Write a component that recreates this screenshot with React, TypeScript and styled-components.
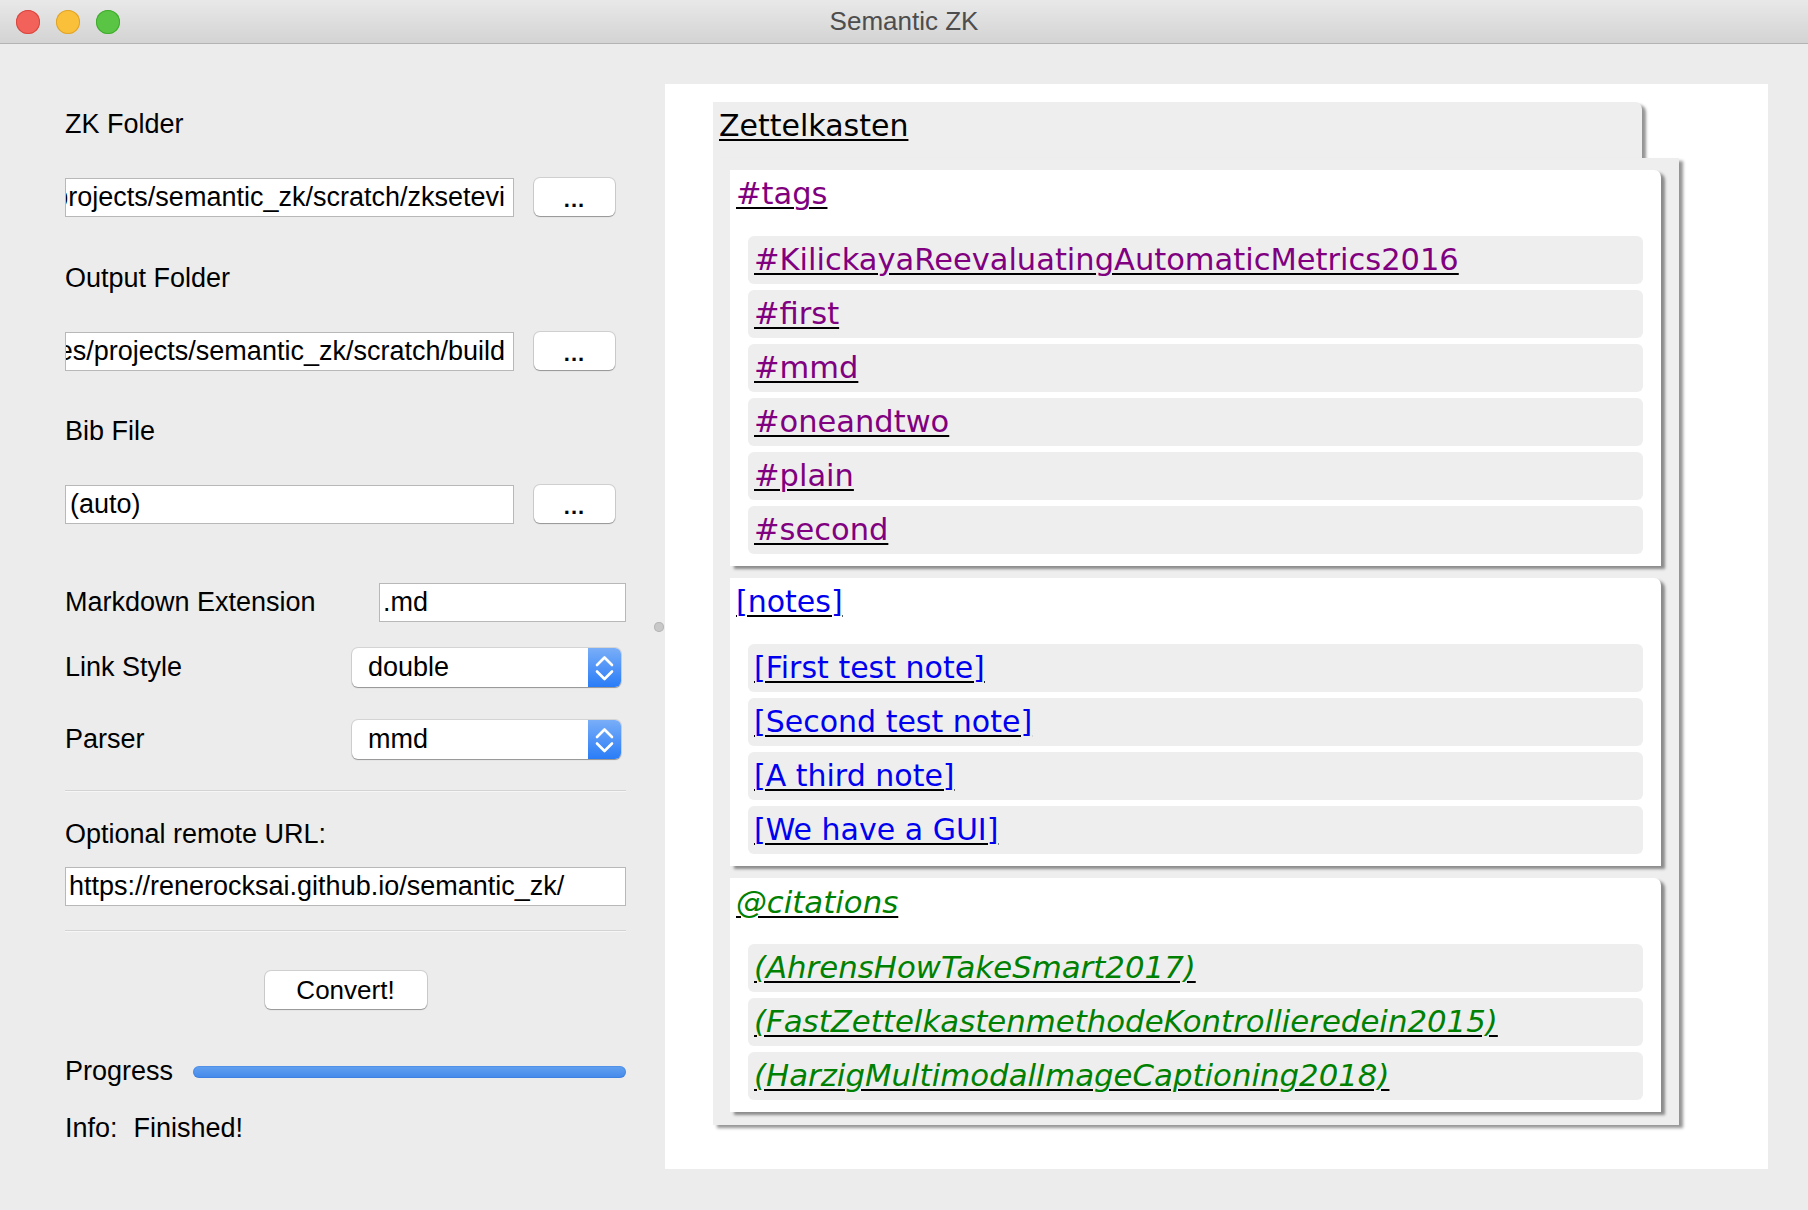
import React from "react";
import styled, { createGlobalStyle, css } from "styled-components";

const GlobalStyle = createGlobalStyle`
  html, body {
    margin: 0;
    padding: 0;
    background: #ececec;
  }
  body {
    font-family: "Liberation Sans", Arial, sans-serif;
    color: #000;
  }
`;

const Window = styled.div`
  width: 1808px;
  height: 1210px;
  display: flex;
  flex-direction: column;
  background: #ececec;
  overflow: hidden;
`;

const TitleBar = styled.div`
  height: 43px;
  flex: none;
  border-bottom: 1px solid #b3b3b3;
  background: linear-gradient(#e9e9e9, #d3d3d3);
  display: grid;
  grid-template-columns: 1fr auto 1fr;
  align-items: center;
`;

const Lights = styled.div`
  display: flex;
  gap: 16px;
  padding-left: 16px;
`;

const Light = styled.span<{ $fill: string; $edge: string }>`
  width: 24px;
  height: 24px;
  border-radius: 50%;
  background: ${(p) => p.$fill};
  box-shadow: inset 0 0 0 1px ${(p) => p.$edge};
`;

const Title = styled.div`
  font-size: 26px;
  color: #4d4d4d;
`;

const Body = styled.div`
  flex: 1;
  display: flex;
  min-height: 0;
`;

const LeftPanel = styled.div`
  width: 652px;
  flex: none;
  box-sizing: border-box;
  padding: 0 26px 0 65px;
  display: flex;
  flex-direction: column;
  font-size: 27px;
`;

const Label = styled.div<{ $top: number }>`
  height: 39px;
  line-height: 39px;
  margin-top: ${(p) => p.$top}px;
  white-space: nowrap;
`;

const PathRow = styled.div<{ $top: number }>`
  display: flex;
  gap: 20px;
  margin-top: ${(p) => p.$top}px;
`;

const fieldBox = css`
  box-sizing: border-box;
  height: 39px;
  background: #fff;
  border: 1px solid #b8b8b8;
  display: flex;
  align-items: center;
  overflow: hidden;
  white-space: nowrap;
`;

const PathField = styled.div<{ $scrolled?: boolean }>`
  ${fieldBox};
  width: 449px;
  justify-content: ${(p) => (p.$scrolled ? "flex-end" : "flex-start")};
  padding: 0 8px 0 4px;
`;

const PushButton = styled.div<{ $width: number }>`
  box-sizing: border-box;
  width: ${(p) => p.$width}px;
  height: 38px;
  background: #fff;
  border-radius: 6px;
  box-shadow: 0 0 0 1px rgba(0, 0, 0, 0.12), 0 1px 1px rgba(0, 0, 0, 0.28);
  display: flex;
  align-items: center;
  justify-content: center;
  font-size: 26px;
`;

const Dots = styled.span`
  font-weight: bold;
  font-size: 22px;
  letter-spacing: 1px;
  padding-top: 6px;
`;

const FormRow = styled.div<{ $top: number }>`
  display: flex;
  align-items: center;
  justify-content: space-between;
  margin-top: ${(p) => p.$top}px;
`;

const ExtField = styled.div`
  ${fieldBox};
  width: 247px;
  padding-left: 3px;
`;

const Select = styled.div`
  box-sizing: border-box;
  width: 269px;
  height: 39px;
  margin-right: 5px;
  display: flex;
  background: #fff;
  border-radius: 6px;
  box-shadow: 0 0 0 1px rgba(0, 0, 0, 0.1), 0 1px 1px rgba(0, 0, 0, 0.3);
`;

const SelectText = styled.div`
  flex: 1;
  line-height: 39px;
  padding-left: 16px;
`;

const SelectArrow = styled.div`
  width: 33px;
  border-radius: 0 6px 6px 0;
  background: linear-gradient(#79aef8, #2a7cf7);
  display: flex;
  align-items: center;
  justify-content: center;
`;

const Separator = styled.div<{ $top: number }>`
  height: 1px;
  background: #d3d3d3;
  margin-top: ${(p) => p.$top}px;
  box-shadow: 0 1px 0 #f6f6f6;
`;

const UrlField = styled.div<{ $top: number }>`
  ${fieldBox};
  margin-top: ${(p) => p.$top}px;
  padding-left: 3px;
`;

const CenterRow = styled.div<{ $top: number }>`
  display: flex;
  justify-content: center;
  margin-top: ${(p) => p.$top}px;
`;

const ProgressRow = styled.div<{ $top: number }>`
  height: 39px;
  display: flex;
  align-items: center;
  gap: 20px;
  margin-top: ${(p) => p.$top}px;
`;

const ProgressBar = styled.div`
  flex: 1;
  height: 12px;
  border-radius: 6px;
  background: linear-gradient(#62a1f1, #4389ea);
  box-shadow: inset 0 0 0 1px rgba(40, 100, 200, 0.25);
`;

const InfoRow = styled.div<{ $top: number }>`
  height: 39px;
  line-height: 39px;
  display: flex;
  gap: 16px;
  margin-top: ${(p) => p.$top}px;
`;

const Splitter = styled.div`
  width: 13px;
  flex: none;
  display: flex;
  align-items: center;
  justify-content: center;
`;

const SplitterDot = styled.span`
  width: 10px;
  height: 10px;
  border-radius: 50%;
  background: #c8c8c8;
  box-shadow: inset 0 0 0 1px #b6b6b6;
`;

const RightPanel = styled.div`
  flex: 1;
  margin: 40px 40px 41px 0;
  background: #fff;
  box-sizing: border-box;
  padding: 18px 0 0 48px;
  font-family: "DejaVu Sans", Verdana, sans-serif;
  font-size: 30px;
  display: flex;
  flex-direction: column;
  align-items: flex-start;
`;

const shadow = "4px 3px 3px rgba(0, 0, 0, 0.42)";

const ZkHeader = styled.div`
  width: 929px;
  height: 56px;
  box-sizing: border-box;
  padding: 4px 6px;
  background: #eeeeee;
  border-radius: 0 7px 0 0;
  box-shadow: ${shadow};
`;

const ZkBody = styled.div`
  width: 966px;
  box-sizing: border-box;
  padding: 12px 18px 13px 17px;
  background: #eeeeee;
  display: flex;
  flex-direction: column;
  gap: 12px;
  box-shadow: ${shadow};
`;

const Card = styled.div`
  background: #fff;
  border-radius: 0 7px 0 0;
  padding: 4px 18px 12px 6px;
  box-shadow: ${shadow};
`;

type Kind = "plain" | "tag" | "note" | "cite";

const linkColor: Record<Kind, string> = {
  plain: "#000000",
  tag: "#800080",
  note: "#0000ee",
  cite: "#008000",
};

const linkSize: Record<Kind, number> = {
  plain: 30,
  tag: 30.5,
  note: 30,
  cite: 30.8,
};

const Link = styled.a<{ $kind: Kind }>`
  color: ${(p) => linkColor[p.$kind]};
  font-size: ${(p) => linkSize[p.$kind]}px;
  font-style: ${(p) => (p.$kind === "cite" ? "italic" : "normal")};
  text-decoration: underline;
  text-decoration-color: #000;
  text-decoration-thickness: 2px;
  text-underline-offset: 3px;
  line-height: 40px;
  white-space: nowrap;
`;

const CardHeading = styled.div`
  height: 40px;
  line-height: 40px;
`;

const RowList = styled.div`
  display: flex;
  flex-direction: column;
  gap: 6px;
  margin: 22px 0 0 12px;
`;

const Row = styled.div`
  height: 48px;
  line-height: 48px;
  padding: 0 6px;
  background: #eeeeee;
  border-radius: 6px;
`;

const Chevrons = () => (
  <svg width="33" height="39" viewBox="0 0 33 39" fill="none">
    <path d="M9 17 L16.5 9.5 L24 17" stroke="#fff" strokeWidth="2.6" strokeLinecap="round" strokeLinejoin="round" />
    <path d="M9 23.5 L16.5 31 L24 23.5" stroke="#fff" strokeWidth="2.6" strokeLinecap="round" strokeLinejoin="round" />
  </svg>
);

const sections: { kind: Kind; title: string; items: string[] }[] = [
  {
    kind: "tag",
    title: "#tags",
    items: [
      "#KilickayaReevaluatingAutomaticMetrics2016",
      "#first",
      "#mmd",
      "#oneandtwo",
      "#plain",
      "#second",
    ],
  },
  {
    kind: "note",
    title: "[notes]",
    items: ["[First test note]", "[Second test note]", "[A third note]", "[We have a GUI]"],
  },
  {
    kind: "cite",
    title: "@citations",
    items: [
      "(AhrensHowTakeSmart2017)",
      "(FastZettelkastenmethodeKontrollieredein2015)",
      "(HarzigMultimodalImageCaptioning2018)",
    ],
  },
];

export default function App() {
  return (
    <>
      <GlobalStyle />
      <Window>
        <TitleBar>
          <Lights>
            <Light $fill="#f2625a" $edge="#d8473f" />
            <Light $fill="#fbc03a" $edge="#dea32a" />
            <Light $fill="#5ac544" $edge="#3fab2d" />
          </Lights>
          <Title>Semantic ZK</Title>
          <div />
        </TitleBar>
        <Body>
          <LeftPanel>
            <Label $top={61}>ZK Folder</Label>
            <PathRow $top={34}>
              <PathField $scrolled>/Users/rs/projects/semantic_zk/scratch/zksetevi</PathField>
              <PushButton $width={81}>
                <Dots>...</Dots>
              </PushButton>
            </PathRow>
            <Label $top={42}>Output Folder</Label>
            <PathRow $top={34}>
              <PathField $scrolled>/Users/renes/projects/semantic_zk/scratch/build</PathField>
              <PushButton $width={81}>
                <Dots>...</Dots>
              </PushButton>
            </PathRow>
            <Label $top={41}>Bib File</Label>
            <PathRow $top={34}>
              <PathField>(auto)</PathField>
              <PushButton $width={81}>
                <Dots>...</Dots>
              </PushButton>
            </PathRow>
            <FormRow $top={59}>
              <span>Markdown Extension</span>
              <ExtField>.md</ExtField>
            </FormRow>
            <FormRow $top={26}>
              <span>Link Style</span>
              <Select>
                <SelectText>double</SelectText>
                <SelectArrow>
                  <Chevrons />
                </SelectArrow>
              </Select>
            </FormRow>
            <FormRow $top={33}>
              <span>Parser</span>
              <Select>
                <SelectText>mmd</SelectText>
                <SelectArrow>
                  <Chevrons />
                </SelectArrow>
              </Select>
            </FormRow>
            <Separator $top={31} />
            <Label $top={24}>Optional remote URL:</Label>
            <UrlField $top={13}>https://renerocksai.github.io/semantic_zk/</UrlField>
            <Separator $top={24} />
            <CenterRow $top={40}>
              <PushButton $width={162}>Convert!</PushButton>
            </CenterRow>
            <ProgressRow $top={43}>
              <span>Progress</span>
              <ProgressBar />
            </ProgressRow>
            <InfoRow $top={18}>
              <span>Info:</span>
              <span>Finished!</span>
            </InfoRow>
          </LeftPanel>
          <Splitter>
            <SplitterDot />
          </Splitter>
          <RightPanel>
            <ZkHeader>
              <Link $kind="plain">Zettelkasten</Link>
            </ZkHeader>
            <ZkBody>
              {sections.map((s) => (
                <Card key={s.title}>
                  <CardHeading>
                    <Link $kind={s.kind}>{s.title}</Link>
                  </CardHeading>
                  <RowList>
                    {s.items.map((it) => (
                      <Row key={it}>
                        <Link $kind={s.kind}>{it}</Link>
                      </Row>
                    ))}
                  </RowList>
                </Card>
              ))}
            </ZkBody>
          </RightPanel>
        </Body>
      </Window>
    </>
  );
}
